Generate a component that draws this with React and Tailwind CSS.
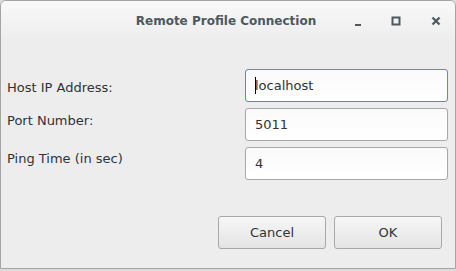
import React from 'react';

const font = { fontFamily: '"DejaVu Sans", "Liberation Sans", sans-serif' };

const Field = ({ value, focused }) => (
  <div
    className={`w-[203px] h-[33px] rounded-[3px] border bg-gradient-to-b from-[#fafafa] to-white flex items-center pl-[9px] text-[13px] text-[#2e3436] ${
      focused ? 'border-[#4a90d9]' : 'border-[#a8a8a8]'
    }`}
  >
    {focused && <span className="w-px h-[17px] bg-black -mr-px" />}
    {value}
  </div>
);

const Button = ({ children }) => (
  <button className="w-[108px] h-[33px] rounded-[3px] border border-[#a8a8a8] bg-gradient-to-b from-[#f6f6f6] to-[#e4e4e4] text-[13px] text-[#2e3436] flex items-center justify-center">
    {children}
  </button>
);

export default function App() {
  return (
    <div className="w-[456px] h-[271px] bg-[#dcdcdc]" style={font}>
      <div className="h-[269px] border border-[#a4a4a4] rounded-t-[6px] bg-[#ededed] flex flex-col overflow-hidden">
        {/* title bar */}
        <div className="h-[40px] shrink-0 bg-gradient-to-b from-[#f9f9f9] to-[#ededed] flex items-center relative">
          <div className="w-full text-center text-[12px] font-bold text-[#4c595e] -mt-[1px]">
            <span className="ml-[-4px]">Remote Profile Connection</span>
          </div>
          <div className="absolute right-0 top-0 h-full flex items-center">
            <svg width="8" height="8" viewBox="0 0 8 8" className="mr-[29px] mt-[4px]">
              <rect x="1" y="5" width="6" height="2" fill="#4c595e" />
            </svg>
            <svg width="10" height="10" viewBox="0 0 10 10" className="mr-[30px]">
              <rect x="1.5" y="1.5" width="7" height="7" fill="none" stroke="#4c595e" strokeWidth="2" />
            </svg>
            <svg width="10" height="10" viewBox="0 0 10 10" className="mr-[14px]">
              <path d="M1.5 1.5 L8.5 8.5 M8.5 1.5 L1.5 8.5" stroke="#4c595e" strokeWidth="2.2" />
            </svg>
          </div>
        </div>

        {/* form */}
        <div className="flex flex-col pl-[6px] pt-[28px] text-[13px] text-[#2e3436]">
          <div className="flex items-start h-[39px]">
            <span className="w-[238px] pt-[9px]">Host IP Address:</span>
            <Field value="localhost" focused />
          </div>
          <div className="flex items-start h-[39px]">
            <span className="w-[238px] pt-[3px]">Port Number:</span>
            <Field value="5011" />
          </div>
          <div className="flex items-start h-[34px]">
            <span className="w-[238px] pt-[2px]">Ping Time (in sec)</span>
            <Field value="4" />
          </div>
        </div>

        <div className="flex justify-end gap-[8px] pr-[13px] mt-[35px]">
          <Button>Cancel</Button>
          <Button>OK</Button>
        </div>
      </div>
    </div>
  );
}
